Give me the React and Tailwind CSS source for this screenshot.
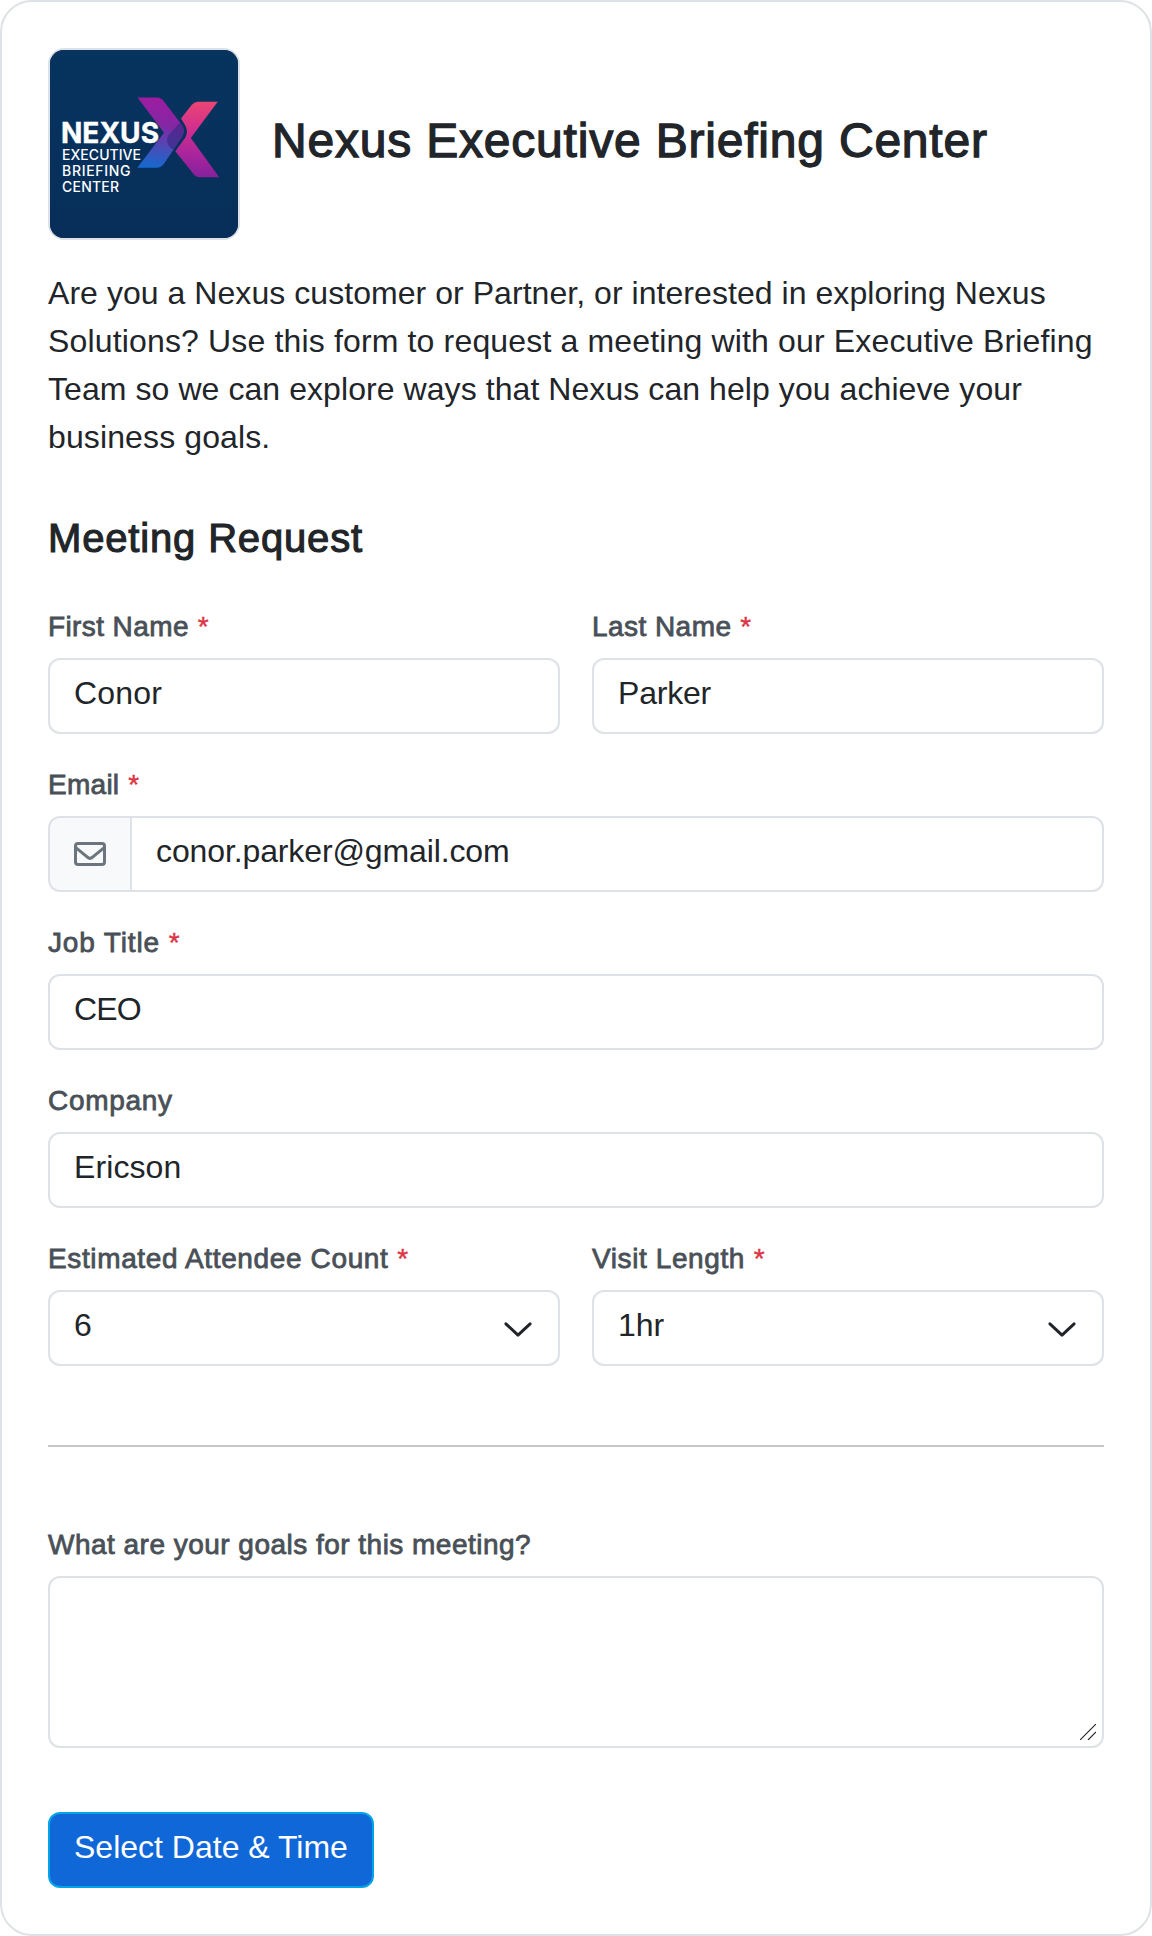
const control =
  "block h-[76px] w-full rounded-xl border-2 border-[#dee2e6] bg-white px-6 pt-[9px] pb-[15px] text-[32px] leading-[48px] text-[#212529] outline-none";

function Field({ label, required, tracking, children }) {
  return (
    <div className="flex flex-col">
      <label className="mb-[10px] whitespace-nowrap pt-px text-[28px] leading-[42px] text-[#495057]">
        <span className={`[-webkit-text-stroke:0.8px_currentColor] ${tracking}`}>{label}</span>
        {required && <span className="ml-px text-[#dc3545] [-webkit-text-stroke:0.4px_currentColor]"> *</span>}
      </label>
      {children}
    </div>
  );
}

function TextInput({ value, className = "" }) {
  return <input type="text" defaultValue={value} className={`${control} ${className}`} />;
}

function Select({ value }) {
  return (
    <div className="relative">
      <select defaultValue={value} className={`${control} appearance-none`}>
        <option>{value}</option>
      </select>
      <svg
        viewBox="0 0 32 32"
        className="pointer-events-none absolute top-[22px] right-[26px] size-8"
        fill="none"
        stroke="#212529"
        strokeWidth="3"
        strokeLinecap="round"
        strokeLinejoin="round"
      >
        <path d="M3.9 11.8 16 23.2 28.1 11.8" />
      </svg>
    </div>
  );
}

function EnvelopeIcon() {
  return (
    <svg viewBox="0 0 32 32" className="size-8" fill="none" stroke="currentColor" strokeWidth="3">
      <rect x="1.5" y="5.5" width="29" height="21" rx="2.5" />
      <path d="M1.8 9.6 13.4 19.2Q16 21.5 18.6 19.2L30.2 9.6" />
    </svg>
  );
}

function Logo() {
  return (
    <div className="size-48 shrink-0 overflow-hidden rounded-2xl border-2 border-[#dee2e6] bg-[#07305b]">
      <svg viewBox="50 50 188 188" className="block size-full">
        <defs>
          <linearGradient id="bg" x1="0" y1="0" x2="0" y2="1">
            <stop offset="0" stopColor="#06345f" />
            <stop offset="1" stopColor="#072e59" />
          </linearGradient>
          <linearGradient id="left" gradientUnits="userSpaceOnUse" x1="160" y1="97" x2="152" y2="168">
            <stop offset="0" stopColor="#a01ca0" />
            <stop offset="0.4" stopColor="#8227a4" />
            <stop offset="0.7" stopColor="#4a4cb8" />
            <stop offset="1" stopColor="#146ace" />
          </linearGradient>
          <linearGradient id="right" gradientUnits="userSpaceOnUse" x1="205" y1="101" x2="200" y2="178">
            <stop offset="0" stopColor="#ec4672" />
            <stop offset="0.4" stopColor="#d02d90" />
            <stop offset="0.7" stopColor="#a9259c" />
            <stop offset="1" stopColor="#84209d" />
          </linearGradient>
        </defs>
        <rect x="50" y="50" width="188" height="188" fill="url(#bg)" />
        <path
          fill="url(#left)"
          d="M137.5 97.5H156.5Q161 97.5 163.6 101L182 125Q185.6 131 182 137L164.5 163Q161.5 167.7 156.5 167.7H137.3L164 132.7Z"
        />
        <path
          fill="#3f2a86"
          fillOpacity="0.7"
          d="M180 122.6 182 125Q185.6 131 182 137L173.5 149.7Q168 147 167 141Q166.5 137 170 133.5Z"
        />
        <path
          fill="url(#right)"
          d="M217.7 101.7H198Q194.5 101.7 191.8 104.8L181 118.6L185 125Q188.8 131.5 185 138L175.3 151.2L193.5 174Q196 177.2 200 177.2H219.2L190.8 138Z"
        />
        <g fill="#fff" fontFamily="Inter, sans-serif">
          <text x="61" y="143.3" fontSize="29" fontWeight="700" stroke="#fff" strokeWidth="0.4" textLength="98" lengthAdjust="spacingAndGlyphs">NEXUS</text>
          <g fontSize="14" fontWeight="500">
            <text x="62" y="160" textLength="79" lengthAdjust="spacing">EXECUTIVE</text>
            <text x="62" y="175.7" textLength="68.5" lengthAdjust="spacing">BRIEFING</text>
            <text x="62" y="191.5" textLength="57" lengthAdjust="spacing">CENTER</text>
          </g>
        </g>
      </svg>
    </div>
  );
}

export default function App() {
  return (
    <div className="min-h-[1936px] bg-white">
      <main className="flex min-h-[1936px] flex-col rounded-[32px] border-2 border-[#dee2e6] bg-white p-[46px] font-['Liberation_Sans',Arial,sans-serif] text-[#212529]">
        <header className="flex items-center gap-8">
          <Logo />
          <h1 className="pb-1.5 text-[48px] leading-[58px] tracking-[0.8px] whitespace-nowrap [-webkit-text-stroke:1.3px_currentColor]">
            Nexus Executive Briefing Center
          </h1>
        </header>

        <p className="mt-[29px] text-[32px] leading-[48px] whitespace-nowrap">
          <span className="block tracking-[0.05px]">Are you a Nexus customer or Partner, or interested in exploring Nexus</span>
          <span className="block tracking-[0.155px]">Solutions? Use this form to request a meeting with our Executive Briefing</span>
          <span className="block tracking-[0.07px]">Team so we can explore ways that Nexus can help you achieve your</span>
          <span className="block tracking-[0.12px]">business goals.</span>
        </p>

        <h2 className="mt-[53px] text-[40px] leading-[48px] tracking-[0.84px] [-webkit-text-stroke:1.1px_currentColor]">
          Meeting Request
        </h2>

        <form className="mt-[43px] flex flex-col gap-[29px]">
          <div className="grid grid-cols-2 gap-8">
            <Field label="First Name" required tracking="tracking-[0.4px]">
              <TextInput value="Conor" className="tracking-[0.17px]" />
            </Field>
            <Field label="Last Name" required tracking="tracking-[0.45px]">
              <TextInput value="Parker" className="tracking-[-0.2px]" />
            </Field>
          </div>

          <Field label="Email" required tracking="tracking-[0.27px]">
            <div className="flex">
              <span className="flex h-[76px] w-[82px] shrink-0 items-center justify-center rounded-l-xl border-2 border-r-0 border-[#dee2e6] bg-[#f8f9fa] text-[#6c757d]">
                <EnvelopeIcon />
              </span>
              <TextInput value="conor.parker@gmail.com" className="rounded-l-none tracking-[-0.12px]" />
            </div>
          </Field>

          <Field label="Job Title" required tracking="tracking-[0.85px]">
            <TextInput value="CEO" className="tracking-[-0.9px]" />
          </Field>

          <Field label="Company" tracking="tracking-[0.7px]">
            <TextInput value="Ericson" className="tracking-[0.1px]" />
          </Field>

          <div className="grid grid-cols-2 gap-8">
            <Field label="Estimated Attendee Count" required tracking="tracking-[0.63px]">
              <Select value="6" />
            </Field>
            <Field label="Visit Length" required tracking="tracking-[0.6px]">
              <Select value="1hr" />
            </Field>
          </div>

          <hr className="mt-[50px] mb-[47px] border-t-2 border-[#c8c8c9]" />

          <Field label="What are your goals for this meeting?" tracking="tracking-[0.48px]">
            <div className="relative">
              <textarea className="block h-[172px] w-full resize-none rounded-xl border-2 border-[#dee2e6] bg-white px-6 py-3 text-[32px] leading-[48px] outline-none" />
              <svg
                viewBox="0 0 16 16"
                className="pointer-events-none absolute right-2 bottom-2 size-4"
                stroke="#2b2b2b"
                strokeWidth="1.2"
              >
                <path d="M0 16 16 0M8 16 16 8" />
              </svg>
            </div>
          </Field>

          <button
            type="button"
            className="mt-[35px] h-[76px] w-[326px] rounded-xl border-2 border-[#04a5e8] bg-[#1067d8] pt-[9px] pb-[15px] text-left pl-6 text-[32px] leading-[48px] whitespace-nowrap text-white"
          >
            Select Date &amp; Time
          </button>
        </form>
      </main>
    </div>
  );
}
